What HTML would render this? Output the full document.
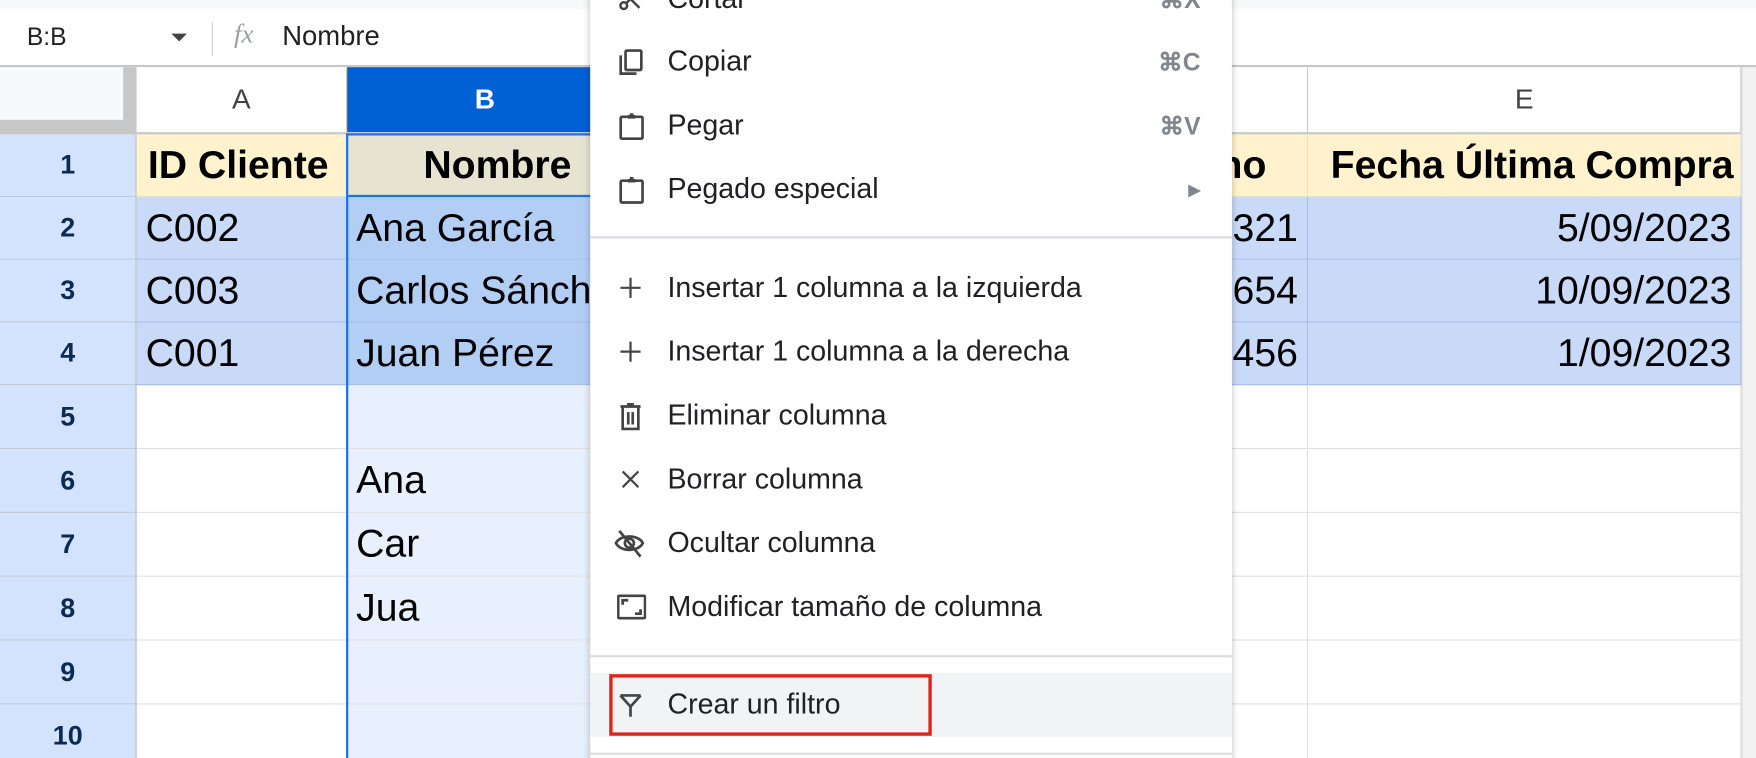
<!DOCTYPE html>
<html><head><meta charset="utf-8"><style>
html,body{margin:0;padding:0;width:1756px;height:758px;overflow:hidden;background:#fff}
#w{position:absolute;left:0;top:0;width:1568px;height:677px;transform:scale(1.1199);transform-origin:0 0;font-family:"Liberation Sans",Arial,sans-serif;overflow:hidden}
.a{position:absolute;box-sizing:border-box}
.c{position:absolute;box-sizing:border-box;border-right:1px solid #e1e1e1;border-bottom:1px solid #e1e1e1;font-size:35px;color:#000;line-height:56px;padding:0 8px;white-space:nowrap;overflow:hidden}
.rh{position:absolute;left:0;width:122px;background:#d3e3fd;border-bottom:1px solid #c0c8d6;border-right:1px solid #bbb;text-align:center;font-weight:bold;font-size:24px;color:#0b2a55;box-sizing:border-box}
.mi{position:absolute;left:0;width:573px;height:57px;font-size:25.5px;color:#202124;line-height:57px}
.mi .t{position:absolute;left:69px}
.mi .k{position:absolute;right:28px;color:#80868b;font-weight:bold;font-size:22px}
.mi svg{position:absolute;left:24px;top:16px}
</style></head><body><div id="w">
<div class="a" style="left:0;top:0;width:1568px;height:8px;background:#f8f9fa"></div>
<div class="a" style="left:0;top:8px;width:1568px;height:52px;background:#fff;border-bottom:2px solid #c7c7c7"></div>
<div class="a" style="left:24px;top:20px;font-size:22px;color:#202124">B:B</div>
<div class="a" style="left:153px;top:30px;width:0;height:0;border-left:7px solid transparent;border-right:7px solid transparent;border-top:7px solid #444"></div>
<div class="a" style="left:189px;top:20px;width:1px;height:30px;background:#ccc"></div>
<div class="a" style="left:209px;top:18px;font-size:24px;color:#9aa0a6;font-style:italic;font-family:'Liberation Serif',serif">fx</div>
<div class="a" style="left:252px;top:19px;font-size:24.5px;color:#202124">Nombre</div>
<!-- header row -->
<div class="a" style="left:0;top:60px;width:122px;height:60px;background:#c7c7c7"></div>
<div class="a" style="left:0;top:60px;width:110px;height:47px;background:#f8f9fa"></div>
<div class="a" style="left:122px;top:60px;width:188px;height:58px;background:#fff;border-right:1px solid #c7c7c7;text-align:center;line-height:58px;font-size:25px;color:#444">A</div>
<div class="a" style="left:310px;top:60px;width:260px;height:58px;background:#0160d3;text-align:center;line-height:58px;font-size:25px;color:#fff;font-weight:bold;padding-right:14px">B</div>
<div class="a" style="left:1100px;top:60px;width:68px;height:58px;background:#fff;border-right:1px solid #c7c7c7"></div>
<div class="a" style="left:1168px;top:60px;width:387px;height:58px;background:#fff;border-right:1px solid #c7c7c7;text-align:center;line-height:58px;font-size:25px;color:#444">E</div>
<div class="a" style="left:0;top:118px;width:1555px;height:2px;background:#c7c7c7"></div>
<div class="a" style="left:1555px;top:60px;width:13px;height:617px;background:#f1f1f1;border-left:1px solid #ddd"></div>
<!-- row headers -->
<div class="rh" style="top:120px;height:56px;line-height:56px">1</div>
<div class="rh" style="top:176px;height:56px;line-height:56px">2</div>
<div class="rh" style="top:232px;height:56px;line-height:56px">3</div>
<div class="rh" style="top:288px;height:56px;line-height:56px">4</div>
<div class="rh" style="top:344px;height:57px;line-height:57px">5</div>
<div class="rh" style="top:401px;height:57px;line-height:57px">6</div>
<div class="rh" style="top:458px;height:57px;line-height:57px">7</div>
<div class="rh" style="top:515px;height:57px;line-height:57px">8</div>
<div class="rh" style="top:572px;height:57px;line-height:57px">9</div>
<div class="rh" style="top:629px;height:57px;line-height:57px">10</div>
<!-- row 1 -->
<div class="c" style="left:122px;top:120px;width:188px;height:56px;background:#fff2cc;font-weight:bold;padding-left:10px">ID Cliente</div>
<div class="c" style="left:310px;top:120px;width:260px;height:56px;background:#e6e4d1;font-weight:bold;padding-left:68px">Nombre</div>
<div class="c" style="left:1100px;top:120px;width:68px;height:56px;background:#fff2cc;font-weight:bold;padding-left:0;text-indent:-12px">no</div>
<div class="c" style="left:1168px;top:120px;width:387px;height:56px;background:#fff2cc;font-weight:bold;text-align:right;padding:0 6px 0 0">Fecha Última Compra</div>
<!-- rows 2-4 -->
<div class="c" style="left:122px;top:176px;width:188px;height:56px;background:#c9daf8;border-color:#a6bfe6">C002</div>
<div class="c" style="left:310px;top:176px;width:260px;height:56px;background:#b3cef4;border-color:#a6bfe6">Ana García</div>
<div class="c" style="left:1100px;top:176px;width:68px;height:56px;background:#c9daf8;border-color:#a6bfe6;padding:0;text-align:right;padding-right:8px">321</div>
<div class="c" style="left:1168px;top:176px;width:387px;height:56px;background:#c9daf8;border-color:#a6bfe6;text-align:right">5/09/2023</div>
<div class="c" style="left:122px;top:232px;width:188px;height:56px;background:#c9daf8;border-color:#a6bfe6">C003</div>
<div class="c" style="left:310px;top:232px;width:260px;height:56px;background:#b3cef4;border-color:#a6bfe6">Carlos Sánchez</div>
<div class="c" style="left:1100px;top:232px;width:68px;height:56px;background:#c9daf8;border-color:#a6bfe6;padding:0;text-align:right;padding-right:8px">654</div>
<div class="c" style="left:1168px;top:232px;width:387px;height:56px;background:#c9daf8;border-color:#a6bfe6;text-align:right">10/09/2023</div>
<div class="c" style="left:122px;top:288px;width:188px;height:56px;background:#c9daf8;border-color:#a6bfe6">C001</div>
<div class="c" style="left:310px;top:288px;width:260px;height:56px;background:#b3cef4;border-color:#a6bfe6">Juan Pérez</div>
<div class="c" style="left:1100px;top:288px;width:68px;height:56px;background:#c9daf8;border-color:#a6bfe6;padding:0;text-align:right;padding-right:8px">456</div>
<div class="c" style="left:1168px;top:288px;width:387px;height:56px;background:#c9daf8;border-color:#a6bfe6;text-align:right">1/09/2023</div>
<!-- rows 5-10 -->
<div class="c" style="left:122px;top:344px;width:188px;height:57px"></div><div class="c" style="left:310px;top:344px;width:260px;height:57px;background:#e8f0fd"></div><div class="c" style="left:1100px;top:344px;width:68px;height:57px"></div><div class="c" style="left:1168px;top:344px;width:387px;height:57px"></div>
<div class="c" style="left:122px;top:401px;width:188px;height:57px"></div><div class="c" style="left:310px;top:401px;width:260px;height:57px;background:#e8f0fd">Ana</div><div class="c" style="left:1100px;top:401px;width:68px;height:57px"></div><div class="c" style="left:1168px;top:401px;width:387px;height:57px"></div>
<div class="c" style="left:122px;top:458px;width:188px;height:57px"></div><div class="c" style="left:310px;top:458px;width:260px;height:57px;background:#e8f0fd">Car</div><div class="c" style="left:1100px;top:458px;width:68px;height:57px"></div><div class="c" style="left:1168px;top:458px;width:387px;height:57px"></div>
<div class="c" style="left:122px;top:515px;width:188px;height:57px"></div><div class="c" style="left:310px;top:515px;width:260px;height:57px;background:#e8f0fd">Jua</div><div class="c" style="left:1100px;top:515px;width:68px;height:57px"></div><div class="c" style="left:1168px;top:515px;width:387px;height:57px"></div>
<div class="c" style="left:122px;top:572px;width:188px;height:57px"></div><div class="c" style="left:310px;top:572px;width:260px;height:57px;background:#e8f0fd"></div><div class="c" style="left:1100px;top:572px;width:68px;height:57px"></div><div class="c" style="left:1168px;top:572px;width:387px;height:57px"></div>
<div class="c" style="left:122px;top:629px;width:188px;height:57px"></div><div class="c" style="left:310px;top:629px;width:260px;height:57px;background:#e8f0fd"></div><div class="c" style="left:1100px;top:629px;width:68px;height:57px"></div><div class="c" style="left:1168px;top:629px;width:387px;height:57px"></div>
<!-- selection border -->
<div class="a" style="left:309px;top:119px;width:2px;height:560px;background:#1a73e8"></div>
<div class="a" style="left:309px;top:119px;width:260px;height:2px;background:#1a73e8"></div>
<div class="a" style="left:311px;top:174px;width:260px;height:2px;background:#1a73e8"></div>
<!-- menu -->
<div class="a" style="left:527px;top:-20px;width:573px;height:700px;background:#fff;box-shadow:0 2px 6px rgba(0,0,0,.25)">
<div class="mi" style="top:-9px"><svg width="24" height="24" viewBox="0 0 24 24" fill="none" stroke="#444" stroke-width="2.2"><circle cx="6" cy="18" r="3"/><path d="M8 16L20 4M8 8l12 12"/></svg><span class="t">Cortar</span><span class="k">⌘X</span></div>
<div class="mi" style="top:47px"><svg width="26" height="26" viewBox="0 0 24 24" fill="none" stroke="#444" stroke-width="2.2"><rect x="7" y="2" width="13" height="16" rx="1"/><path d="M3 6v15h13"/></svg><span class="t">Copiar</span><span class="k">⌘C</span></div>
<div class="mi" style="top:104px"><svg width="26" height="26" viewBox="0 0 24 24" fill="none" stroke="#444" stroke-width="2.2"><rect x="3" y="4" width="18" height="18" rx="1"/><path d="M9 4h6M12 1v4" stroke-width="3"/></svg><span class="t">Pegar</span><span class="k">⌘V</span></div>
<div class="mi" style="top:161px"><svg width="26" height="26" viewBox="0 0 24 24" fill="none" stroke="#444" stroke-width="2.2"><rect x="3" y="4" width="18" height="18" rx="1"/><path d="M9 4h6M12 1v4" stroke-width="3"/></svg><span class="t">Pegado especial</span><span class="k" style="font-size:14px;color:#80868b">▶</span></div>
<div class="a" style="left:0;top:231px;width:573px;height:2px;background:#dadce0"></div>
<div class="mi" style="top:249px"><svg width="24" height="24" viewBox="0 0 24 24" stroke="#444" stroke-width="2"><path d="M12 3v18M3 12h18"/></svg><span class="t">Insertar 1 columna a la izquierda</span></div>
<div class="mi" style="top:306px"><svg width="24" height="24" viewBox="0 0 24 24" stroke="#444" stroke-width="2"><path d="M12 3v18M3 12h18"/></svg><span class="t">Insertar 1 columna a la derecha</span></div>
<div class="mi" style="top:363px"><svg width="24" height="26" viewBox="0 0 24 26" fill="none" stroke="#444" stroke-width="2.4"><path d="M3 4h18M9 2h6M5 5v19h14V5M10 9v11M14 9v11"/></svg><span class="t">Eliminar columna</span></div>
<div class="mi" style="top:420px"><svg width="24" height="24" viewBox="0 0 24 24" stroke="#444" stroke-width="2"><path d="M5 5l14 14M19 5L5 19"/></svg><span class="t">Borrar columna</span></div>
<div class="mi" style="top:477px"><svg width="28" height="28" viewBox="0 0 28 28" fill="none" stroke="#444" stroke-width="2.4" style="left:21px;top:14px"><path d="M2 14C6 6 22 6 26 14C22 22 6 22 2 14Z"/><circle cx="14" cy="14" r="4"/><path d="M5 3l19 23"/></svg><span class="t">Ocultar columna</span></div>
<div class="mi" style="top:534px"><svg width="26" height="24" viewBox="0 0 26 24" fill="none" stroke="#444" stroke-width="2.4"><rect x="1" y="2" width="24" height="20" rx="1"/><path d="M5 10V6h5M21 14v4h-5"/></svg><span class="t">Modificar tamaño de columna</span></div>
<div class="a" style="left:0;top:605px;width:573px;height:2px;background:#dadce0"></div>
<div class="a" style="left:0;top:621px;width:573px;height:57px;background:#f1f3f4"></div>
<div class="mi" style="top:621px"><svg width="24" height="24" viewBox="0 0 24 24" fill="none" stroke="#444" stroke-width="2.4"><path d="M3 4h18M3 4l9 10M21 4l-9 10M12 14v9"/></svg><span class="t">Crear un filtro</span></div>
<div class="a" style="left:17px;top:622px;width:288px;height:55px;border:3px solid #e02418"></div>
<div class="a" style="left:0;top:692px;width:573px;height:2px;background:#dadce0"></div>
</div>
</div></body></html>
